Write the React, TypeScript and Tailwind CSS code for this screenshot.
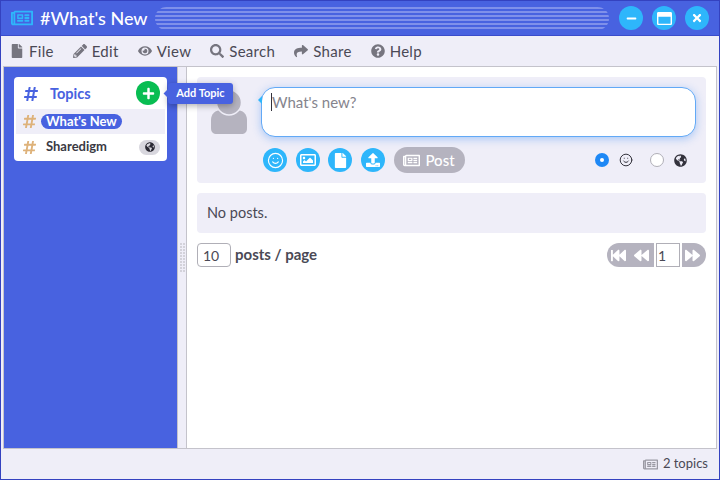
import React from 'react';
import {
  FaFile,
  FaPencilAlt,
  FaEye,
  FaSearch,
  FaShare,
  FaQuestionCircle,
  FaHashtag,
  FaPlus,
  FaGlobeAmericas,
  FaRegImage,
  FaUpload,
  FaRegNewspaper,
  FaFastBackward,
  FaBackward,
  FaForward,
  FaMinus,
  FaRegWindowMaximize,
  FaTimes,
} from 'react-icons/fa';
import { Smile } from 'lucide-react';

const menus = [
  { label: 'File', icon: FaFile },
  { label: 'Edit', icon: FaPencilAlt },
  { label: 'View', icon: FaEye },
  { label: 'Search', icon: FaSearch },
  { label: 'Share', icon: FaShare },
  { label: 'Help', icon: FaQuestionCircle },
];

const stripes = [0, 1, 2, 3, 4, 5];

const WindowButton = ({ children }: { children: React.ReactNode }) => (
  <button className="flex h-6 w-6 items-center justify-center rounded-full bg-[#2eb6fb] text-white">
    {children}
  </button>
);

const ToolButton = ({ children }: { children: React.ReactNode }) => (
  <button className="flex h-6 w-6 items-center justify-center rounded-full bg-[#2eb6fb] text-[13px] text-white">
    {children}
  </button>
);

const Avatar = () => (
  <svg width="36" height="44" viewBox="0 0 36 44" className="text-[#b5b3bf]" fill="currentColor">
    <path d="M11 20h14c7 0 11 4 11 10v8c0 4-2 6-6 6H6c-4 0-6-2-6-6v-8c0-6 4-10 11-10z" />
    <circle cx="18" cy="12.5" r="12.5" stroke="#efeef8" strokeWidth="1.5" />
  </svg>
);

export default function App() {
  return (
    <div className="relative flex h-[480px] w-[720px] flex-col overflow-hidden border-x border-b border-[#3442c0] bg-[#efeef8] font-['Lato','Noto_Sans',sans-serif] text-[#4a4955]">
      {/* title bar */}
      <div className="flex h-[36px] shrink-0 items-center border-t border-b border-t-[#3442c0] border-b-[#3a4ccb] bg-[#4862e0] pl-[10px] pr-[10px]">
        <FaRegNewspaper className="text-[22px] text-[#2eb6fb]" />
        <div className="ml-[7px] w-[115px] text-[18px] leading-none font-medium whitespace-nowrap text-white">#What's New</div>
        <div className="flex h-[23px] w-[454px] flex-col justify-between overflow-hidden rounded-full">
          {stripes.map((i) => (
            <div key={i} className="h-[2px] bg-[#7f90ea]" />
          ))}
        </div>
        <div className="ml-[10px] flex gap-[9px]">
          <WindowButton>
            <FaMinus className="text-[11px]" />
          </WindowButton>
          <WindowButton>
            <FaRegWindowMaximize className="text-[15px]" />
          </WindowButton>
          <WindowButton>
            <FaTimes className="text-[12px]" />
          </WindowButton>
        </div>
      </div>

      {/* menu bar */}
      <div className="flex h-[30px] shrink-0 items-center gap-[19px] pl-[9px] text-[15px] tracking-[0.3px]">
        {menus.map((m) => (
          <div key={m.label} className="flex items-center gap-[5px]">
            <m.icon className="text-[14px] text-[#76757f]" />
            <span>{m.label}</span>
          </div>
        ))}
      </div>

      {/* body */}
      <div className="mx-[2px] flex min-h-0 flex-1 border border-[#c4c3cb] bg-white">
        <div className="w-[173px] shrink-0 bg-[#4862e0] pl-[10px] pt-[10px]">
          <div className="w-[153px] rounded-[4px] bg-white px-[2px] pb-[1px]">
            <div className="flex h-[32px] items-center pl-[7px] pr-[5px] font-bold text-[#4862e0]">
              <FaHashtag className="mt-[2px] text-[16px]" />
              <span className="ml-[11px] mt-[2px] text-[14.5px]">Topics</span>
              <div className="ml-auto flex h-6 w-6 items-center justify-center rounded-full bg-[#08bd52] text-white">
                <FaPlus className="text-[13px]" />
              </div>
            </div>
            <div className="flex h-[25px] items-center bg-[#efeef8] pl-[6px]">
              <FaHashtag className="text-[15px] text-[#deb27a]" />
              <span className="ml-[4px] rounded-full bg-[#4862e0] px-[5px] text-[13px] font-bold leading-[15px] text-white">What's New</span>
            </div>
            <div className="flex h-[26px] items-center pl-[6px] pr-[5px]">
              <FaHashtag className="text-[15px] text-[#deb27a]" />
              <span className="ml-[9px] text-[13px] font-bold text-[#3a3943]">Sharedigm</span>
              <div className="ml-auto flex h-[15px] w-[21px] items-center justify-center rounded-full bg-[#d8d7de]">
                <FaGlobeAmericas className="text-[10px] text-[#2a2933]" />
              </div>
            </div>
          </div>
        </div>

        {/* splitter */}
        <div className="flex w-[10px] shrink-0 items-center justify-center border-x border-[#c4c3cb] bg-[#efeef8]">
          <div className="grid grid-cols-2 gap-[1px]">
            {Array.from({ length: 20 }).map((_, i) => (
              <div key={i} className="h-[2px] w-[2px] bg-[#d3d2da]" />
            ))}
          </div>
        </div>

        {/* main */}
        <div className="flex min-w-0 flex-1 flex-col pl-[10px] pr-[10px] pt-[10px]">
          <div className="flex h-[106px] rounded-[4px] bg-[#efeef8] pl-[14px] pr-[10px] pt-[10px]">
            <div className="flex w-[36px] shrink-0 justify-center pt-[3px]">
              <Avatar />
            </div>
            <div className="ml-[14px] min-w-0 flex-1">
              <div className="relative h-[50px] rounded-[14px] border border-[#62a9f6] bg-white pl-[9px] pt-[3px] text-[15px] leading-[22px] text-[#85848d] shadow-[0_2px_8px_rgba(80,150,245,0.45)]">
                <div className="absolute left-[-4px] top-[8px] h-0 w-0 border-y-[4px] border-r-[4px] border-y-transparent border-r-[#2eb6fb]" />
                <span className="border-l border-[#33323c]">What's new?</span>
              </div>
              <div className="mt-[10px] flex items-center pl-[2px]">
                <div className="flex gap-[8.5px]">
                  <ToolButton>
                    <Smile size={17} strokeWidth={1.6} />
                  </ToolButton>
                  <ToolButton>
                    <FaRegImage className="text-[16px]" />
                  </ToolButton>
                  <ToolButton>
                    <FaFile className="text-[15px]" />
                  </ToolButton>
                  <ToolButton>
                    <FaUpload className="text-[14px]" />
                  </ToolButton>
                </div>
                <button className="ml-[9px] flex h-[26px] w-[71px] items-center justify-center gap-[5px] rounded-full bg-[#b5b3bf] text-[15px] font-medium text-white">
                  <FaRegNewspaper className="text-[17px]" />
                  Post
                </button>
                <div className="ml-[130px] flex h-[14px] w-[14px] items-center justify-center rounded-full bg-[#1e88f5]">
                  <div className="h-[4px] w-[4px] rounded-full bg-white" />
                </div>
                <Smile size={14} strokeWidth={1.7} className="ml-[10px] text-[#33323c]" />
                <div className="ml-[17px] h-[14px] w-[14px] rounded-full border border-[#b0afb7] bg-white" />
                <FaGlobeAmericas className="ml-[10px] text-[13px] text-[#33323c]" />
              </div>
            </div>
          </div>

          <div className="mt-[10px] flex h-[40px] items-center rounded-[4px] bg-[#efeef8] pb-[1px] pl-[10px] text-[14.5px]">No posts.</div>

          <div className="mt-[10px] flex h-[24px] items-center">
            <div className="flex h-[24px] w-[34px] items-center rounded-[4px] border border-[#b0afb7] pl-[5px] text-[14px]">10</div>
            <span className="mb-[1px] ml-[4px] text-[15px] font-bold">posts / page</span>
            <div className="ml-auto flex h-[24px] items-center text-[15px] text-white">
              <div className="flex h-[24px] w-[47px] items-center justify-between rounded-l-full bg-[#b5b3bf] pl-[4px] pr-[5px]">
                <FaFastBackward />
                <FaBackward />
              </div>
              <div className="mx-[2px] flex h-[24px] w-[24px] items-center border border-[#b0afb7] bg-white pl-[1px] text-[14px] text-[#4a4955]">1</div>
              <div className="flex h-[24px] w-[24px] items-center rounded-r-full bg-[#b5b3bf] pl-[3px]">
                <FaForward />
              </div>
            </div>
          </div>
        </div>
      </div>

      {/* status bar */}
      <div className="flex h-[30px] shrink-0 items-center justify-end gap-[5px] pr-[11px] text-[13px]">
        <FaRegNewspaper className="text-[15px] text-[#9a99a3]" />
        2 topics
      </div>

      {/* tooltip */}
      <div className="absolute left-[167px] top-[83px] flex h-[21px] w-[65px] items-center justify-center rounded-[3px] bg-[#4862e0] text-[11px] font-bold text-white shadow-[0_2px_6px_rgba(0,0,0,0.3)]">
        <div className="absolute left-[-3px] top-[7px] h-[7px] w-[7px] rotate-45 bg-[#4862e0]" />
        <span className="relative">Add Topic</span>
      </div>
    </div>
  );
}
